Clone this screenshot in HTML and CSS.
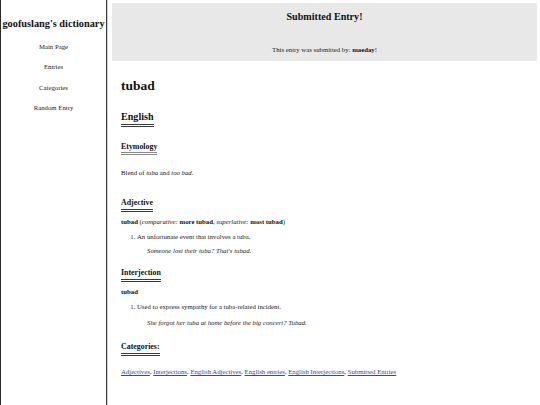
FILE: index.html
```html
<!DOCTYPE html>
<html lang="en">
<head>
<meta charset="utf-8">
<title>tubad - goofuslang's dictionary</title>
<link rel="stylesheet" href="styles.css">
</head>
<body>
<nav class="sidebar">
  <div class="site-title">goofuslang's dictionary</div>
  <a class="nav-link" href="#">Main Page</a>
  <a class="nav-link" href="#">Entries</a>
  <a class="nav-link" href="#">Categories</a>
  <a class="nav-link" href="#">Random Entry</a>
</nav>
<main class="main">
  <header class="notice">
    <div class="notice-title">Submitted Entry!</div>
    <div class="notice-text">This entry was submitted by: <b>maeday</b>!</div>
  </header>
  <article class="entry">
    <h1 class="word">tubad</h1>
    <h2 class="lang"><span class="ul">English</span></h2>
    <h3 class="sec sec-ety"><span class="ul">Etymology</span></h3>
    <p class="line line-ety">Blend of <i>tuba</i> and <i>too bad</i>.</p>
    <h3 class="sec sec-adj"><span class="ul">Adjective</span></h3>
    <p class="line head-line"><b>tubad</b> (<i>comparative:</i> <b>more tubad</b>, <i>superlative:</i> <b>most tubad</b>)</p>
    <ol class="defs">
      <li class="def">An unfortunate event that involves a tuba.</li>
    </ol>
    <p class="example"><i>Someone lost their tuba? That's tubad.</i></p>
    <h3 class="sec sec-int"><span class="ul">Interjection</span></h3>
    <p class="line head-line"><b>tubad</b></p>
    <ol class="defs">
      <li class="def">Used to express sympathy for a tuba-related incident.</li>
    </ol>
    <p class="example example-last"><i>She forgot her tuba at home before the big concert? Tubad.</i></p>
    <h3 class="sec sec-cat"><span class="ul">Categories:</span></h3>
    <p class="line cats"><a href="#">Adjectives</a>, <a href="#">Interjections</a>, <a href="#">English Adjectives</a>, <a href="#">English entries</a>, <a href="#">English Interjections</a>, <a href="#">Submitted Entries</a></p>
  </article>
</main>
</body>
</html>
```
FILE: styles.css
```css
html, body {
  margin: 0;
  padding: 0;
  background: #fff;
}
body {
  display: flex;
  align-items: flex-start;
  font-family: "Liberation Serif", "Times New Roman", serif;
  font-size: 6.75px;
  color: #1a1a1a;
}
.sidebar {
  width: 107px;
  min-height: 100vh;
  box-sizing: border-box;
  border-left: 1px solid #2a2a2a;
  border-right: 1px solid #3a3a3a;
  box-shadow: 1px 0 0 #cfcfcf;
  display: flex;
  flex-direction: column;
  align-items: center;
  padding-top: 18px;
  flex-shrink: 0;
}
.site-title {
  font-size: 10.3px;
  font-weight: bold;
  line-height: 12px;
  white-space: nowrap;
  color: #111;
  margin-bottom: 13px;
}
.nav-link {
  display: block;
  line-height: 8px;
  color: #222;
  text-decoration: none;
  margin-bottom: 12.3px;
}
.main {
  flex: 1;
  margin: 3px 3px 0 5px;
  min-width: 0;
}
.notice {
  background: #e8e8e8;
  text-align: center;
  padding: 8px 0 7px;
}
.notice-title {
  font-size: 10.1px;
  font-weight: bold;
  line-height: 12px;
  color: #111;
}
.notice-text {
  line-height: 8px;
  margin-top: 23px;
}
.notice-text b {
  color: #111;
}
.entry {
  padding-left: 9px;
}
.word {
  margin: 17px 0 0;
  font-size: 13.5px;
  line-height: 16px;
  color: #111;
}
.lang {
  margin: 17px 0 0;
  font-size: 10.1px;
  line-height: 12px;
  color: #111;
}
.ul {
  display: inline-block;
  border-bottom: 3px double #3a3a3a;
  padding-bottom: 1px;
}
.sec {
  font-size: 7.9px;
  line-height: 10px;
  color: #111;
  margin: 0;
}
.sec-ety { margin-top: 15px; }
.sec-ety .ul { border-bottom-color: #8a8a8a; padding-bottom: 0; }
.sec-adj { margin-top: 21px; }
.sec-int { margin-top: 13px; }
.sec-cat { margin-top: 15px; }
.line {
  margin: 0;
  line-height: 8px;
}
.line-ety { margin-top: 14px; }
.head-line { margin-top: 6px; }
.head-line b { color: #111; }
.defs {
  margin: 7px 0 0;
  padding-left: 16px;
}
.def {
  line-height: 8px;
}
.example {
  margin: 6px 0 0 26px;
  line-height: 8px;
}
.example-last {
  margin-top: 8px;
}
.cats {
  margin-top: 12px;
}
.cats a {
  color: #3b3bd6;
}
```
